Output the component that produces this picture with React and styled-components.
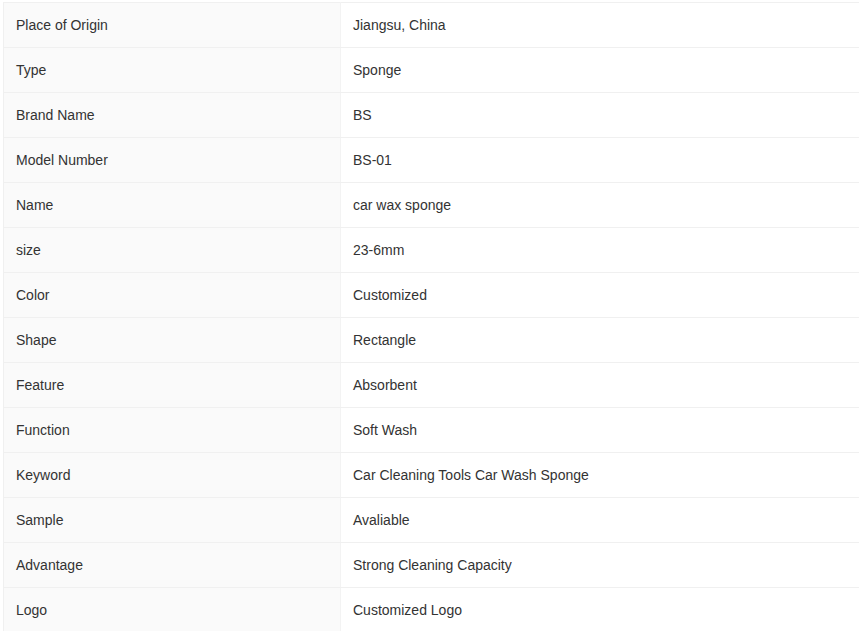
import React from "react";
import styled, { createGlobalStyle } from "styled-components";

const Global = createGlobalStyle`
  body {
    margin: 0;
    background: #fff;
    font-family: "Liberation Sans", Arial, sans-serif;
  }
`;

const Wrap = styled.div`
  padding: 2px 0 0 3px;
`;

const Table = styled.table`
  width: 856px;
  border-collapse: collapse;
  table-layout: fixed;
  font-size: 14px;
  color: #333;
`;

const Row = styled.tr`
  height: 45px;
`;

const Label = styled.td`
  width: 312px;
  padding: 0 12px;
  background: #fafafa;
  border: 1px solid #f0f0f0;
  border-right-color: #f3f3f3;
`;

const Value = styled.td`
  padding: 0 12px;
  background: #fff;
  border: 1px solid #f0f0f0;
  border-right: none;
`;

const specs = [
  ["Place of Origin", "Jiangsu, China"],
  ["Type", "Sponge"],
  ["Brand Name", "BS"],
  ["Model Number", "BS-01"],
  ["Name", "car wax sponge"],
  ["size", "23-6mm"],
  ["Color", "Customized"],
  ["Shape", "Rectangle"],
  ["Feature", "Absorbent"],
  ["Function", "Soft Wash"],
  ["Keyword", "Car Cleaning Tools Car Wash Sponge"],
  ["Sample", "Avaliable"],
  ["Advantage", "Strong Cleaning Capacity"],
  ["Logo", "Customized Logo"],
];

export default function App() {
  return (
    <Wrap>
      <Global />
      <Table>
        <tbody>
          {specs.map(([k, v]) => (
            <Row key={k}>
              <Label>{k}</Label>
              <Value>{v}</Value>
            </Row>
          ))}
        </tbody>
      </Table>
    </Wrap>
  );
}
